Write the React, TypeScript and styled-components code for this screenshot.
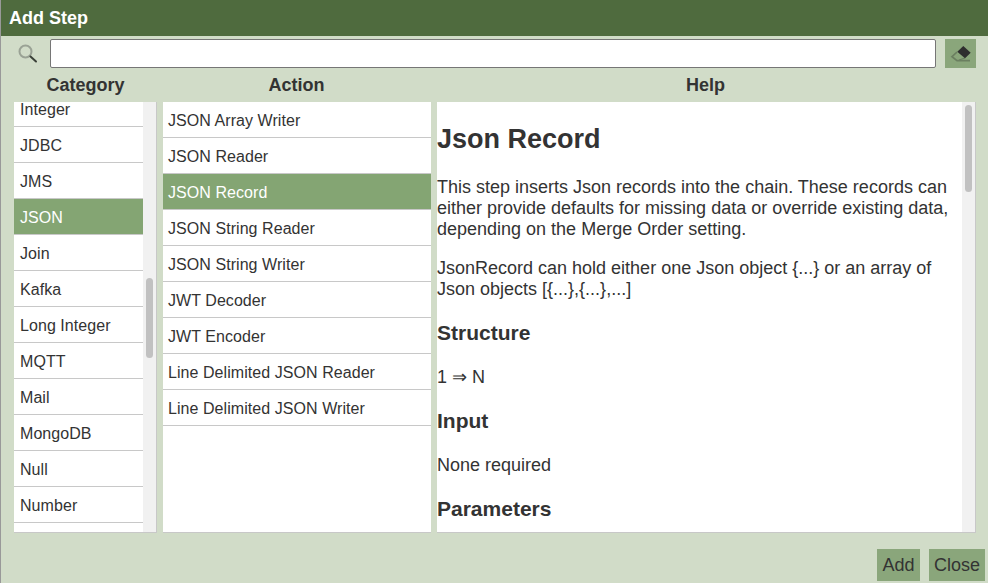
import React from "react";
import styled, { createGlobalStyle } from "styled-components";

const categories = ["Integer", "JDBC", "JMS", "JSON", "Join", "Kafka", "Long Integer", "MQTT", "Mail", "MongoDB", "Null", "Number", ""];
const actions = [
  "JSON Array Writer",
  "JSON Reader",
  "JSON Record",
  "JSON String Reader",
  "JSON String Writer",
  "JWT Decoder",
  "JWT Encoder",
  "Line Delimited JSON Reader",
  "Line Delimited JSON Writer",
];

const App: React.FC = () => {
  return (
    <Dialog>
      <GlobalStyle />
      <TitleBar>Add Step</TitleBar>
      <SearchRow>
        <SearchIcon viewBox="0 0 20 20">
          <circle cx="7.5" cy="7.5" r="6" fill="none" stroke="#9aa295" strokeWidth="2" />
          <path d="M12.5 12.5 L18 17.5" stroke="#3a4038" strokeWidth="2" strokeLinecap="round" />
        </SearchIcon>
        <SearchInput />
        <EraserButton>
          <svg width="31" height="29" viewBox="0 0 31 29">
            <path d="M12 13 L7 17.7 L12 21.7 L25 21.7" fill="none" stroke="#6b7f60" strokeWidth="1.7" />
            <path d="M14 21 L20 19" fill="none" stroke="#6b7f60" strokeWidth="1.2" />
            <path d="M18.3 7 L25.7 13.7 L20 19.3 L12.3 12.7 Z" fill="#2e2e2e" />
          </svg>
        </EraserButton>
      </SearchRow>
      <Headers>
        <Heading>Category</Heading>
        <Heading>Action</Heading>
        <Heading>Help</Heading>
      </Headers>
      <Columns>
        <Panel>
          <ListBody $offset={-11}>
            {categories.map((c, i) => (
              <Row key={i} $indent={6} $selected={c === "JSON"}>{c}</Row>
            ))}
          </ListBody>
          <ScrollTrack>
            <ScrollThumb $top={176} $size={80} />
          </ScrollTrack>
        </Panel>
        <Panel $flush>
          <ListBody $offset={0}>
            {actions.map((a) => (
              <Row key={a} $indent={5} $selected={a === "JSON Record"}>{a}</Row>
            ))}
          </ListBody>
        </Panel>
        <Panel>
          <HelpBody>
            <H1>Json Record</H1>
            <P>
              This step inserts Json records into the chain. These records can either provide defaults for missing
              data or override existing data, depending on the Merge Order setting.
            </P>
            <P>JsonRecord can hold either one Json object {"{...}"} or an array of Json objects [{"{...}"},{"{...}"},...]</P>
            <H3>Structure</H3>
            <P>1 ⇒ N</P>
            <H3>Input</H3>
            <P>None required</P>
            <H3>Parameters</H3>
          </HelpBody>
          <ScrollTrack>
            <ScrollThumb $top={3} $size={87} />
          </ScrollTrack>
        </Panel>
      </Columns>
      <Footer>
        <FooterButton>Add</FooterButton>
        <FooterButton>Close</FooterButton>
      </Footer>
    </Dialog>
  );
};

export default App;

const GlobalStyle = createGlobalStyle`
  html, body {
    margin: 0;
    height: 100%;
    overflow: hidden;
  }
  body {
    font-family: "Liberation Sans", Arial, sans-serif;
    color: #333;
  }
  * {
    box-sizing: border-box;
  }
`;

const Dialog = styled.div`
  width: 988px;
  height: 583px;
  background: #d1dcc8;
  border-left: 1px solid #999;
  display: flex;
  flex-direction: column;
`;

const TitleBar = styled.div`
  height: 36px;
  background: #4f6b3e;
  color: #fff;
  font-size: 18px;
  font-weight: bold;
  line-height: 36px;
  padding-left: 8px;
`;

const SearchRow = styled.div`
  height: 34px;
  display: flex;
  align-items: center;
  padding: 0 12px 0 17px;
`;

const SearchIcon = styled.svg`
  width: 20px;
  height: 20px;
  flex: none;
  margin: 2px 12px 0 0;
`;

const SearchInput = styled.input`
  flex: 1;
  height: 29px;
  border: 1px solid #767676;
  border-radius: 2px;
  background: #fff;
  padding: 0;
`;

const EraserButton = styled.button`
  width: 31px;
  height: 29px;
  margin-left: 9px;
  border: none;
  padding: 0;
  background: #8aa67b;
  display: flex;
`;

const Headers = styled.div`
  display: grid;
  grid-template-columns: 143px 267px 539px;
  gap: 6px;
  padding-left: 13px;
  height: 32px;
`;

const Heading = styled.div`
  font-size: 18px;
  font-weight: bold;
  line-height: 30px;
  text-align: center;
`;

const Columns = styled.div`
  height: 431px;
  display: grid;
  grid-template-columns: 143px 268px 539px;
  gap: 6px;
  padding-left: 13px;
`;

const Panel = styled.div<{ $flush?: boolean }>`
  background: #fff;
  border-right: ${(p) => (p.$flush ? "none" : "1px solid #c8c8c8")};
  border-bottom: 1px solid #c8c8c8;
  overflow: hidden;
  display: flex;
`;

const ListBody = styled.div<{ $offset: number }>`
  flex: 1;
  min-width: 0;
  margin-top: ${(p) => p.$offset}px;
`;

const Row = styled.div<{ $selected?: boolean; $indent: number }>`
  height: 36px;
  line-height: 37px;
  padding-left: ${(p) => p.$indent}px;
  font-size: 16px;
  letter-spacing: 0.06px;
  white-space: nowrap;
  border-bottom: 1px solid #c8c8c8;
  background: ${(p) => (p.$selected ? "#84a573" : "#fff")};
  color: ${(p) => (p.$selected ? "#fff" : "#333")};
`;

const ScrollTrack = styled.div`
  width: 13px;
  flex: none;
  background: #f1f1f1;
`;

const ScrollThumb = styled.div<{ $top: number; $size: number }>`
  width: 7px;
  height: ${(p) => p.$size}px;
  margin: ${(p) => p.$top}px 3px 0;
  border-radius: 4px;
  background: #c1c1c1;
`;

const HelpBody = styled.div`
  flex: 1;
  min-width: 0;
  font-size: 18px;
  line-height: 21px;
`;

const H1 = styled.h1`
  font-size: 27px;
  line-height: 31px;
  margin: 22px 0 22px;
`;

const H3 = styled.h3`
  font-size: 21px;
  line-height: 24px;
  margin: 21.4px 0;
`;

const P = styled.p`
  margin: 0 0 18px;
`;

const Footer = styled.div`
  flex: 1;
  display: flex;
  justify-content: flex-end;
  align-items: flex-start;
  gap: 9px;
  padding: 16px 3px 0 0;
`;

const FooterButton = styled.button`
  height: 32px;
  min-width: 43px;
  padding: 0 5px;
  border: none;
  background: #8aa67b;
  color: #333;
  font-family: "Liberation Sans", Arial, sans-serif;
  font-size: 18px;
`;
